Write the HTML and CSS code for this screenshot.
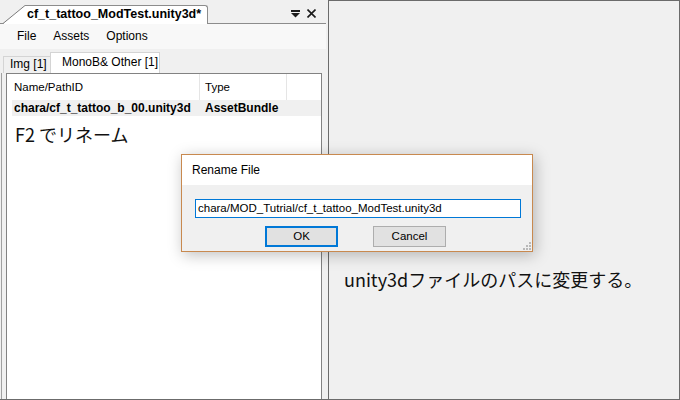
FILE: index.html
```html
<!DOCTYPE html>
<html lang="ja">
<head>
    <meta charset="UTF-8">
    <title>cf_t_tattoo_ModTest.unity3d</title>
    <link rel="stylesheet" href="styles.css">
</head>
<body>
    <div class="app">
        <div class="left">
            <div class="docstrip">
                <svg class="doc-slant" width="22" height="19" viewBox="0 0 22 19">
                    <polygon points="0,19 22,0 22,19" fill="#fff"/>
                    <line x1="0" y1="18.5" x2="22" y2="0.5" stroke="#7a7a7a" stroke-width="1"/>
                </svg>
                <div class="doc-tab">cf_t_tattoo_ModTest.unity3d*</div>
                <div class="doc-btns">
                    <svg width="9" height="8" viewBox="0 0 9 8">
                        <rect x="0" y="0" width="9" height="2" fill="#1a1a1a"/>
                        <polygon points="0,3 9,3 4.5,7.5" fill="#1a1a1a"/>
                    </svg>
                    <svg width="9" height="9" viewBox="0 0 9 9">
                        <path d="M0.5 0.5 L8.5 8.5 M8.5 0.5 L0.5 8.5" stroke="#1a1a1a" stroke-width="1.6"/>
                    </svg>
                </div>
            </div>
            <div class="menubar">
                <span>File</span>
                <span>Assets</span>
                <span>Options</span>
            </div>
            <div class="tabs">
                <div class="tab">Img [1]</div>
                <div class="tab active">MonoB&amp; Other [1]</div>
            </div>
            <div class="listwrap">
                <div class="list">
                    <div class="list-head">
                        <div class="hcol name">Name/PathID</div>
                        <div class="hcol type">Type</div>
                    </div>
                    <div class="list-row">
                        <div class="cell name">chara/cf_t_tattoo_b_00.unity3d</div>
                        <div class="cell">AssetBundle</div>
                    </div>
                    <div class="note note-f2">F2 でリネーム</div>
                </div>
            </div>
        </div>
        <div class="right">
            <div class="note">unity3dファイルのパスに変更する。</div>
        </div>

        <div class="dialog">
            <div class="dlg-title">Rename File</div>
            <div class="dlg-body">
                <div class="dlg-input">chara/MOD_Tutrial/cf_t_tattoo_ModTest.unity3d</div>
                <div class="dlg-buttons">
                    <div class="btn btn-default">OK</div>
                    <div class="btn">Cancel</div>
                </div>
            </div>
            <svg class="grip" width="8" height="8" viewBox="0 0 8 8">
                <rect x="6" y="0" width="2" height="2" fill="#b9b9b9"/>
                <rect x="3" y="3" width="2" height="2" fill="#b9b9b9"/>
                <rect x="6" y="3" width="2" height="2" fill="#b9b9b9"/>
                <rect x="0" y="6" width="2" height="2" fill="#b9b9b9"/>
                <rect x="3" y="6" width="2" height="2" fill="#b9b9b9"/>
                <rect x="6" y="6" width="2" height="2" fill="#b9b9b9"/>
            </svg>
        </div>
    </div>
</body>
</html>
```

FILE: styles.css
```css
* {
    box-sizing: border-box;
}

body {
    margin: 0;
    background-color: #f0f0f0;
    font-family: "Liberation Sans", Arial, sans-serif;
    font-size: 12px;
    color: #000;
}

.app {
    position: relative;
    display: flex;
    width: 680px;
    height: 400px;
    border-bottom: 1px solid #6b6b6b;
    overflow: hidden;
}

/* left dock panel */
.left {
    width: 328px;
    display: flex;
    flex-direction: column;
}

.docstrip {
    display: flex;
    align-items: flex-end;
    height: 24px;
    margin-right: 2px;
    padding-left: 3px;
    border-bottom: 1px solid #8c8c8c;
}

.doc-slant {
    display: block;
    margin-bottom: -1px;
}

.doc-tab {
    height: 19px;
    margin-bottom: -1px;
    padding: 0 6px 0 2px;
    background: #fff;
    border-top: 1px solid #8c8c8c;
    border-right: 1px solid #8c8c8c;
    border-top-right-radius: 3px;
    font-size: 12.5px;
    font-weight: bold;
    line-height: 17px;
}

.doc-btns {
    display: flex;
    align-items: flex-start;
    gap: 7px;
    align-self: flex-start;
    margin-left: auto;
    padding: 9px 10px 0 0;
}

.doc-btns svg {
    display: block;
}

.doc-btns svg:first-child {
    margin-top: 1px;
}

.menubar {
    display: flex;
    gap: 17px;
    height: 25px;
    margin-right: 2px;
    padding-left: 17px;
    background: #f8f8f8;
    line-height: 25px;
}

.tabs {
    display: flex;
    align-items: flex-end;
    height: 24px;
    padding-left: 3px;
}

.tab {
    width: 47px;
    height: 17px;
    padding-left: 6px;
    background: #f0f0f0;
    border-top: 1px solid #d4d4d4;
    border-left: 1px solid #d4d4d4;
    line-height: 14px;
    white-space: nowrap;
}

.tab.active {
    width: 110px;
    height: 21px;
    padding: 2px 0 0 11px;
    background: #fff;
    border-right: 1px solid #d4d4d4;
}

.listwrap {
    flex: 1;
    margin: 0 6px 0 1px;
    padding-left: 4px;
    border-left: 1px solid #a0a0a0;
}

.list {
    height: 100%;
    background: #fff;
    border: 1px solid #828282;
    border-bottom: none;
}

.list-head {
    display: flex;
    height: 26px;
    line-height: 26px;
    font-size: 11.5px;
}

.hcol {
    border-right: 1px solid #e5e5e5;
}

.hcol.name {
    width: 193px;
    padding-left: 7px;
}

.hcol.type {
    width: 87px;
    padding-left: 5px;
}

.list-row {
    display: flex;
    height: 16px;
    margin-left: 5px;
    background: #f0f0f0;
    font-weight: bold;
    line-height: 16px;
}

.cell.name {
    width: 193px;
    padding-left: 2px;
}

.note {
    font-family: "Noto Sans CJK JP", "Noto Sans", sans-serif;
    font-size: 18px;
    line-height: 27px;
    color: #111;
}

.note-f2 {
    margin-top: 6px;
    padding-left: 8px;
    line-height: 24px;
}

/* right panel */
.right {
    flex: 1;
    padding: 265px 0 0 15px;
    border: 1px solid #6b6b6b;
    border-bottom: none;
}

/* rename dialog */
.dialog {
    position: absolute;
    left: 181px;
    top: 154px;
    width: 352px;
    height: 98px;
    background: #f0f0f0;
    border: 1px solid #c8894f;
    box-shadow: 2px 3px 14px rgba(0, 0, 0, 0.25);
}

.dlg-title {
    height: 30px;
    padding-left: 10px;
    background: #fff;
    line-height: 30px;
}

.dlg-body {
    padding: 14px 0 0 13px;
}

.dlg-input {
    width: 326px;
    height: 19px;
    padding-left: 2px;
    background: #fff;
    border: 1px solid #0078d7;
    font-size: 11.5px;
    line-height: 17px;
}

.dlg-buttons {
    display: flex;
    gap: 35px;
    margin-top: 8px;
    padding-left: 70px;
}

.btn {
    width: 73px;
    height: 21px;
    background: #e1e1e1;
    border: 1px solid #adadad;
    font-size: 11.5px;
    line-height: 19px;
    text-align: center;
}

.btn-default {
    border: 2px solid #0078d7;
    line-height: 17px;
}

.grip {
    position: absolute;
    right: 1px;
    bottom: 1px;
}
```
